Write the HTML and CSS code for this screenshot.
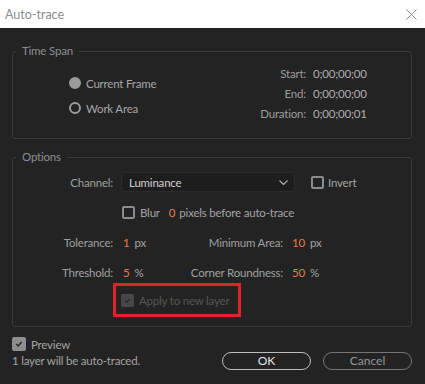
FILE: index.html
```html
<!DOCTYPE html>
<html>
<head>
<meta charset="utf-8">
<link rel="stylesheet" href="styles.css">
</head>
<body>
<div class="titlebar">
  <span class="title">Auto-trace</span>
  <svg class="close" viewBox="0 0 11 11"><path d="M0.5 0.5L10.5 10.5M10.5 0.5L0.5 10.5"/></svg>
</div>
<div class="content">
  <fieldset class="group timespan">
    <legend>Time Span</legend>
    <div class="ts-inner">
      <div class="radios">
        <div class="radio-row"><span class="radio on"></span><span>Current Frame</span></div>
        <div class="radio-row"><span class="radio"></span><span>Work Area</span></div>
      </div>
      <div class="times">
        <span class="tl">Start:</span><span class="tv">0;00;00;00</span>
        <span class="tl">End:</span><span class="tv">0;00;00;00</span>
        <span class="tl">Duration:</span><span class="tv">0;00;00;01</span>
      </div>
    </div>
  </fieldset>

  <fieldset class="group options">
    <legend>Options</legend>
    <div class="opt-inner">
      <div class="row channel">
        <span class="lbl">Channel:</span>
        <div class="select"><span>Luminance</span>
          <svg class="chev" viewBox="0 0 9 5"><path d="M0.5 0.5L4.5 4.5L8.5 0.5"/></svg>
        </div>
        <span class="cb"></span><span class="cb-text">Invert</span>
      </div>
      <div class="row blur">
        <span class="cb"></span><span class="cb-text">Blur</span>
        <span class="val blur-val">0</span><span class="blur-text">pixels before auto-trace</span>
      </div>
      <div class="params">
        <span class="lbl">Tolerance:</span>
        <span class="pv"><span class="val">1</span><span>px</span></span>
        <span class="lbl">Minimum Area:</span>
        <span class="pv"><span class="val">10</span><span>px</span></span>
        <span class="lbl">Threshold:</span>
        <span class="pv"><span class="val">5</span><span>%</span></span>
        <span class="lbl">Corner Roundness:</span>
        <span class="pv"><span class="val">50</span><span>%</span></span>
      </div>
      <div class="apply">
        <span class="cb checked disabled"><svg viewBox="0 0 13 13"><path d="M3 6.5L5.5 9L10 4"/></svg></span>
        <span class="cb-text dim">Apply to new layer</span>
      </div>
    </div>
  </fieldset>

  <div class="footer">
    <div class="foot-left">
      <div class="preview-row">
        <span class="cb checked"><svg viewBox="0 0 13 13"><path d="M3 6.5L5.5 9L10 4"/></svg></span>
        <span class="cb-text">Preview</span>
      </div>
      <div class="note">1 layer will be auto-traced.</div>
    </div>
    <div class="buttons">
      <button class="btn ok">OK</button>
      <button class="btn cancel">Cancel</button>
    </div>
  </div>
</div>
</body>
</html>
```

FILE: styles.css
```css
* { box-sizing: border-box; margin: 0; padding: 0; }
html, body { width: 425px; height: 384px; overflow: hidden; }
body {
  background: #232323;
  font-family: Lato, "Noto Sans", sans-serif;
  font-size: 11.5px;
  letter-spacing: -0.2px;
  color: #a3a3a3;
}
.titlebar {
  height: 28px;
  background: #ffffff;
  display: flex;
  align-items: center;
  justify-content: space-between;
  padding: 0 8px 0 5px;
  letter-spacing: 0;
}
.title { color: #8c8c8c; font-size: 12.5px; }
.close { width: 11px; height: 11px; stroke: #8a8a8a; stroke-width: 1; fill: none; }

.content { padding: 0 13px 0 12px; }

.group {
  border: 1px solid #393939;
  border-radius: 3px;
  min-width: 0;
}
.group legend {
  margin-left: 3px;
  padding: 0 6px;
  line-height: 16px;
  color: #8e8e8e;
}

/* Time span */
.timespan { margin-top: 15px; padding: 5px 0 14px 0; }
.ts-inner { display: flex; }
.radios {
  width: 187px;
  padding: 9px 0 0 56px;
  display: flex;
  flex-direction: column;
  gap: 5px;
}
.radio-row { display: flex; align-items: center; gap: 5px; height: 20px; color: #a6a6a6; }
.radio {
  width: 12px; height: 12px;
  border-radius: 50%;
  border: 2px solid #9a9a9a;
}
.radio.on { background: #9a9a9a; }
.times {
  display: grid;
  grid-template-columns: 106px auto;
  column-gap: 7px;
  line-height: 20px;
}
.tl { text-align: right; color: #9c9c9c; }
.tv { color: #adadad; }

/* Options */
.options { margin-top: 10px; padding: 7px 0 9px 0; }
.row { display: flex; align-items: center; height: 20px; }
.lbl { text-align: right; color: #a0a0a0; }
.channel .lbl { width: 100px; margin-right: 8px; }
.select {
  width: 174px; height: 20px;
  background: #1d1d1d;
  border: 1px solid #2b2b2b;
  border-radius: 3px;
  display: flex; align-items: center; justify-content: space-between;
  padding: 0 6px 0 7px;
  color: #cfcfcf;
}
.chev { width: 9px; height: 5px; stroke: #a8a8a8; stroke-width: 1.2; fill: none; }
.cb {
  width: 13px; height: 13px;
  border: 2px solid #8c8c8c;
  border-radius: 2px;
  flex: none;
  display: flex;
}
.channel .cb { margin-left: 16px; }
.cb-text { margin-left: 5px; color: #a3a3a3; }
.channel .cb-text { margin-left: 4px; }
.blur { margin-top: 10px; padding-left: 109px; }
.val { color: #e07b4c; }
.blur-val { margin-left: 9px; }
.blur-text { margin-left: 4px; }

.params {
  margin-top: 10px;
  display: grid;
  grid-template-columns: 100px 40px 130px auto;
  grid-auto-rows: 20px;
  row-gap: 10px;
  align-items: center;
}
.pv { display: flex; gap: 5px; padding-left: 10px; }
.params .pv:nth-child(4n) { padding-left: 9px; }

.apply {
  margin: 1px 0 0 100px;
  width: 128px; height: 34px;
  border: 3px solid #e1212b;
  display: flex; align-items: center;
  padding-left: 5px;
}
.cb.checked { background: #8e8e8e; border-color: #8e8e8e; }
.cb.checked svg { width: 100%; height: 100%; stroke: #2a2a2a; stroke-width: 2; fill: none; }
.cb.checked.disabled { background: #474747; border-color: #474747; }
.cb.checked.disabled svg { stroke: #2c2c2c; }
.cb-text.dim { color: #575757; }

/* Footer */
.footer {
  margin-top: 9px;
  display: flex;
  justify-content: space-between;
  align-items: flex-end;
}
.preview-row { display: flex; align-items: center; height: 16px; }
.preview-row .cb { width: 14px; height: 14px; }
.note { line-height: 18px; color: #a3a3a3; }
.buttons { display: flex; gap: 12px; }
.btn {
  width: 89px; height: 18px;
  border-radius: 9px;
  background: transparent;
  font-family: inherit;
  font-size: 12px;
  line-height: 14px;
}
.ok { border: 1.5px solid #bdbdbd; color: #e2e2e2; }
.cancel { border: 1.5px solid #747474; color: #979797; }
```
